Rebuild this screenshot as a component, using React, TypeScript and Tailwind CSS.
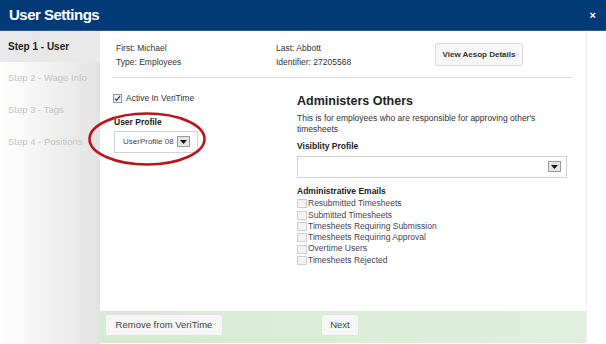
import React from 'react';

const emails = [
  'Resubmitted Timesheets',
  'Submitted Timesheets',
  'Timesheets Requiring Submission',
  'Timesheets Requiring Approval',
  'Overtime Users',
  'Timesheets Rejected',
];

const steps = ['Step 2 - Wage Info', 'Step 3 - Tags', 'Step 4 - Positions'];

function DropButton() {
  return (
    <span className="flex h-[11px] w-[13px] shrink-0 items-center justify-center border border-[#9a9a9a] bg-[#e6e6e6]">
      <svg width="7" height="4" viewBox="0 0 7 4">
        <path d="M0 0h7L3.5 4z" fill="#111" />
      </svg>
    </span>
  );
}

export default function App() {
  return (
    <div
      className="flex h-[344px] w-[606px] flex-col overflow-hidden bg-white text-[#333]"
      style={{ fontFamily: '"Liberation Sans", Arial, sans-serif' }}
    >
      {/* Title bar */}
      <div className="flex h-[31px] shrink-0 items-center justify-between border-b border-[#2e5a8e] bg-[#013a76] pl-[9px] pr-[10px]">
        <span className="text-[15px] font-bold tracking-[-0.5px] text-white">User Settings</span>
        <span className="text-[11px] font-bold text-white">×</span>
      </div>

      <div className="flex min-h-0 flex-1">
        {/* Steps */}
        <div className="flex w-[100px] shrink-0 flex-col bg-gradient-to-r from-white to-[#e3e3e3]">
          <div className="flex h-[31px] items-center bg-[#e8e8e8] pl-[8px] text-[10px] font-bold text-[#222]">
            Step 1 - User
          </div>
          {steps.map((s) => (
            <div key={s} className="flex h-[32px] items-center pl-[8px] text-[9.5px] text-[#c4c4c4]">
              {s}
            </div>
          ))}
        </div>

        {/* Main */}
        <div className="flex w-[486px] shrink-0 flex-col">
          <div className="relative flex-1 pl-[13px] pr-[14px] pt-[10px] text-[8.5px]">
            <div className="flex items-start border-b border-[#d9d9d9] pb-[8px]">
              <div className="w-[163px] pl-[3px] leading-[14px]">
                <div>First: Michael</div>
                <div>Type: Employees</div>
              </div>
              <div className="w-[159px] leading-[14px]">
                <div>Last: Abbott</div>
                <div>Identifier: 27205568</div>
              </div>
              <button className="mt-[2px] h-[23px] w-[88px] rounded-[2px] border border-[#dedede] bg-[#f7f7f7] text-[8px] font-bold text-[#333]">
                View Aesop Details
              </button>
            </div>

            <div className="flex pt-[14px]">
              {/* Left column */}
              <div className="w-[184px]">
                <label className="flex items-center gap-[4px]">
                  <span className="flex h-[9px] w-[9px] items-center justify-center border border-[#9a9a9a] bg-[#eef0f4]">
                    <svg width="7" height="7" viewBox="0 0 7 7">
                      <path d="M1 3.6l1.6 1.8L6 1" stroke="#2a4fa0" strokeWidth="1.3" fill="none" />
                    </svg>
                  </span>
                  Active In VeriTime
                </label>
                <div className="mt-[11px] pl-[1px] font-bold text-[#222]">User Profile</div>
                <div className="ml-[1px] mt-[2px] flex h-[22px] w-[84px] items-center justify-between border border-[#d3d3d3] pl-[8px] pr-[7px] text-[8px] text-[#4a4256]">
                  UserProfile 08
                  <DropButton />
                </div>
              </div>

              {/* Right column */}
              <div className="w-[270px]">
                <div className="text-[12.5px] font-bold text-[#222]">Administers Others</div>
                <div className="mt-[2px] leading-[11px]">
                  This is for employees who are responsible for approving other's timesheets
                </div>
                <div className="mt-[5px] font-bold text-[#222]">Visiblity Profile</div>
                <div className="mt-[3px] flex h-[22px] items-center justify-end border border-[#d3d3d3] pr-[5px]">
                  <DropButton />
                </div>
                <div className="mt-[7px] font-bold text-[#222]">Administrative Emails</div>
                <div className="mt-[1px] leading-[11.3px] text-[#4a4256]">
                  {emails.map((e) => (
                    <div key={e} className="flex items-center gap-[1px]">
                      <span className="h-[9px] w-[10px] border border-[#cfcfcf] bg-[#f4f4f4]" />
                      {e}
                    </div>
                  ))}
                </div>
              </div>
            </div>

            {/* highlight ring */}
            <svg className="absolute left-[-13px] top-[80px]" width="122" height="56" viewBox="0 0 122 56">
              <ellipse cx="60" cy="28" rx="57.5" ry="25.5" fill="none" stroke="#c0121a" strokeWidth="2.6" />
            </svg>
          </div>

          {/* Footer */}
          <div className="mb-[1px] flex h-[32px] shrink-0 items-start bg-gradient-to-r from-[#d6ebd3] to-[#dff0dc] pl-[5px] pt-[3px]">
            <button className="h-[22px] w-[118px] rounded-[3px] border border-[#e2e2e2] bg-[#f6f6f6] text-[9.5px] text-[#444]">
              Remove from VeriTime
            </button>
            <button className="ml-[98px] h-[22px] w-[38px] rounded-[3px] border border-[#e2e2e2] bg-[#f6f6f6] text-[9.5px] text-[#444]">
              Next
            </button>
          </div>
        </div>

        <div className="flex-1 border-l border-[#f2f2f2] bg-white" />
      </div>
    </div>
  );
}
